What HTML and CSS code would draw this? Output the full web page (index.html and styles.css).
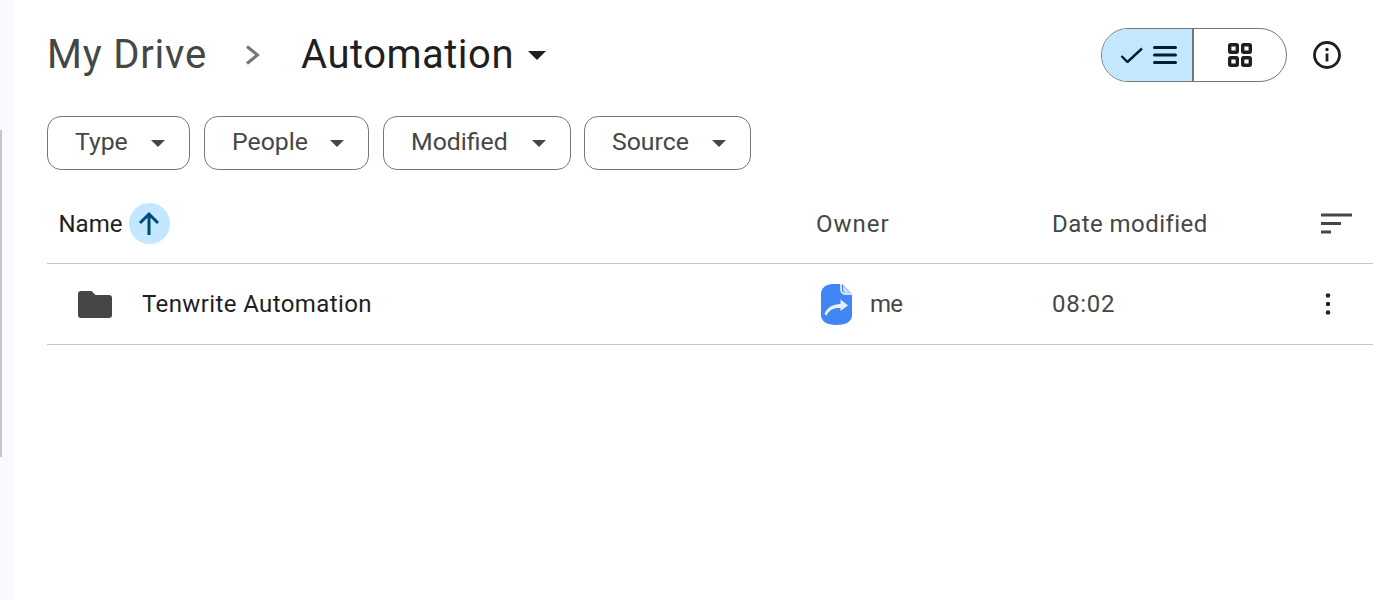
FILE: index.html
```html
<!DOCTYPE html>
<html lang="en">
<head>
<meta charset="utf-8">
<title>Automation - Google Drive</title>
<link rel="stylesheet" href="styles.css">
</head>
<body>
<div class="app">
  <aside class="rail"><div class="thumb"></div></aside>
  <main class="main">
    <header class="top">
      <div class="crumbs">
        <span class="crumb-root">My Drive</span>
        <svg class="crumb-sep" width="16" height="20" viewBox="0 0 16 20"><path d="M2 1.500l10.500 8.500-10.500 8.500" fill="none" stroke="#747775" stroke-width="3"/></svg>
        <span class="crumb-current">Automation</span>
        <svg class="crumb-caret" width="18" height="9" viewBox="0 0 18 9"><path d="M0 0h18l-9 9z" fill="#1f1f1f"/></svg>
      </div>
      <div class="top-actions">
        <div class="view-toggle">
          <div class="view-btn view-list">
            <svg width="24" height="16" viewBox="0 0 24 16"><path d="M1.500 9l6 6L22 1.500" fill="none" stroke="#001d35" stroke-width="2.400"/></svg>
            <svg width="24" height="20" viewBox="0 0 24 20"><path d="M1.500 2.500h21M1.500 10h21M1.500 17.500h21" fill="none" stroke="#001d35" stroke-width="3" stroke-linecap="round"/></svg>
          </div>
          <div class="view-btn view-grid">
            <svg width="24" height="24" viewBox="0 0 24 24" fill="none" stroke="#1f1f1f" stroke-width="3.400"><rect x="1.700" y="1.700" width="7.600" height="7.600" rx="1"/><rect x="14.700" y="1.700" width="7.600" height="7.600" rx="1"/><rect x="1.700" y="14.700" width="7.600" height="7.600" rx="1"/><rect x="14.700" y="14.700" width="7.600" height="7.600" rx="1"/></svg>
          </div>
        </div>
        <svg class="info" width="28" height="28" viewBox="0 0 28 28"><circle cx="14" cy="14" r="12.500" fill="none" stroke="#1f1f1f" stroke-width="2.800"/><path d="M14 12.500v8" stroke="#1f1f1f" stroke-width="2.800"/><circle cx="14" cy="8.500" r="1.700" fill="#1f1f1f"/></svg>
      </div>
    </header>

    <div class="filters">
      <button class="chip chip-type"><span>Type</span><i class="caret"></i></button>
      <button class="chip chip-people"><span>People</span><i class="caret"></i></button>
      <button class="chip chip-modified"><span>Modified</span><i class="caret"></i></button>
      <button class="chip chip-source"><span>Source</span><i class="caret"></i></button>
    </div>

    <div class="table">
      <div class="row head">
        <div class="col-name">
          <span class="name-label">Name</span>
          <span class="sort-btn"><svg width="24" height="26" viewBox="0 0 24 26"><path d="M12 24V3M3 12l9-9 9 9" fill="none" stroke="#004a77" stroke-width="3"/></svg></span>
        </div>
        <div class="col-owner">Owner</div>
        <div class="col-date">Date modified</div>
        <div class="col-end">
          <svg class="sort-lines" width="31" height="21" viewBox="0 0 31 21"><path d="M0 2h31M0 10.500h20M0 19h10" stroke="#444746" stroke-width="3.200"/></svg>
        </div>
      </div>
      <div class="row item">
        <div class="col-name">
          <svg class="folder" width="34" height="27" viewBox="0 0 34 27"><path d="M3 0h10.500l4 4H31a3 3 0 0 1 3 3v17a3 3 0 0 1-3 3H3a3 3 0 0 1-3-3V3a3 3 0 0 1 3-3z" fill="#444746"/></svg>
          <span class="file-name">Tenwrite Automation</span>
        </div>
        <div class="col-owner owner-cell">
          <svg class="avatar" width="31" height="41" viewBox="0 0 31 41"><path d="M12 0H21L31 10V31C31 37 26 41 15.500 41S0 37 0 31V10C0 4 5 0 12 0z" fill="#4285f4"/><path d="M20 0v5.500a4.500 4.500 0 0 0 4.500 4.500H31" fill="none" stroke="#fff" stroke-width="1.500"/><path d="M22 1.500L29.500 9H25a3 3 0 0 1-3-3z" fill="#c6dafc"/><path d="M3.500 30C6 23.500 12 20 19.500 20V15.500L27 21.500l-7.500 5.500V24C13 23.500 8.500 25.500 5.500 31.500z" fill="#e8f0fe"/></svg>
          <span class="owner-name">me</span>
        </div>
        <div class="col-date date-cell">08:02</div>
        <div class="col-end">
          <svg class="more" width="6" height="24" viewBox="0 0 6 24"><circle cx="3" cy="3.500" r="2.200"/><circle cx="3" cy="12" r="2.200"/><circle cx="3" cy="20.500" r="2.200"/></svg>
        </div>
      </div>
    </div>
  </main>
</div>
</body>
</html>
```

FILE: styles.css
```css
* { box-sizing: border-box; }
html, body { margin: 0; height: 100%; background: #fff; overflow: hidden; }
body { font-family: Roboto, "Noto Sans", Arial, sans-serif; color: #1f1f1f; }

.app { display: flex; height: 600px; }
.rail { width: 14px; flex: none; background: #f8fafd; padding-top: 130px; }
.thumb { width: 2px; height: 327px; background: #c4c7c5; }

.main { flex: 1; padding: 0 27px 0 33px; min-width: 0; }

.top { display: flex; justify-content: space-between; align-items: center; height: 110px; padding: 0 32px 0 0; }
.crumbs { display: flex; align-items: center; }
.crumb-root { font-size: 40px; letter-spacing: 0.8px; color: #444746; width: 159px; white-space: nowrap; margin-top: -2px; }
.crumb-sep { margin-left: 39px; }
.crumb-current { font-size: 40px; letter-spacing: 0.5px; color: #1f1f1f; margin-left: 40px; white-space: nowrap; margin-top: -2px; }
.crumb-caret { margin-left: 14px; }

.top-actions { display: flex; align-items: center; gap: 26px; }
.view-toggle { display: flex; width: 186px; height: 54px; border: 1px solid #747775; border-radius: 27px; overflow: hidden; }
.view-btn { display: flex; align-items: center; justify-content: center; }
.view-list { width: 92px; background: #c2e7ff; border-right: 2px solid #747775; gap: 9px; padding-left: 3px; }
.view-grid { flex: 1; }

.filters { display: flex; gap: 14px; margin-top: 6px; }
.chip { display: flex; align-items: center; justify-content: space-between; height: 54px; padding: 0 24px 0 27px; background: #fff; border: 1px solid #747775; border-radius: 14px; font: inherit; font-size: 24.800px; color: #444746; }
.chip span { margin-top: -3px; }
.chip-type { width: 143px; }
.chip-people { width: 165px; }
.chip-modified { width: 188px; }
.chip-source { width: 167px; margin-left: -1px; }
.caret { width: 0; height: 0; border-left: 7px solid transparent; border-right: 7px solid transparent; border-top: 7px solid #444746; }

.table { margin-top: 14px; }
.row { display: flex; align-items: center; border-bottom: 1px solid #c7c7c7; }
.head { height: 80px; font-size: 24px; color: #444746; }
.item { height: 81px; font-size: 24px; }
.col-name { width: 769px; flex: none; display: flex; align-items: center; }
.col-owner { width: 236px; flex: none; letter-spacing: 1px; }
.col-date { flex: 1; letter-spacing: 0.45px; }
.col-end { width: 53px; flex: none; display: flex; }
.head .col-name { padding-left: 11.500px; }
.name-label { color: #1f1f1f; }
.sort-btn { display: flex; align-items: center; justify-content: center; width: 41px; height: 41px; margin-left: 6.500px; border-radius: 50%; background: #c2e7ff; }
.sort-lines { margin-left: 1px; }
.item .col-name { padding-left: 31px; }
.file-name { margin-left: 30px; color: #1f1f1f; letter-spacing: 0.39px; }
.owner-cell { display: flex; align-items: center; padding-left: 5px; }
.owner-name { margin-left: 18px; color: #444746; letter-spacing: -0.8px; }
.date-cell { color: #444746; letter-spacing: 0.65px; }
.more { fill: #1f1f1f; margin-left: 5px; }
```
